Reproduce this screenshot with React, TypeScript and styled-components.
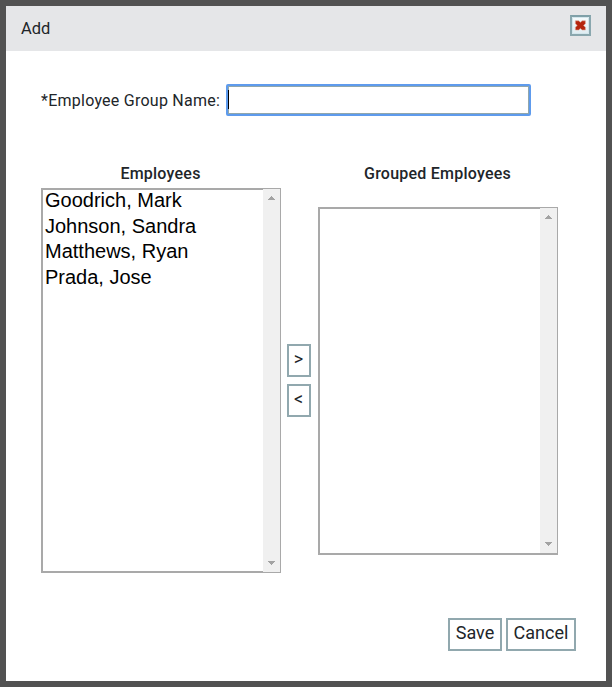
import React from 'react';
import styled, { createGlobalStyle } from 'styled-components';

const GlobalStyle = createGlobalStyle`
  * { box-sizing: border-box; }
  body { margin: 0; background: #525252; font-family: Roboto, sans-serif; color: #212529; }
`;

const Backdrop = styled.div`
  width: 612px;
  height: 687px;
  padding: 6px;
  background: #525252;
`;

const Dialog = styled.section`
  display: flex;
  flex-direction: column;
  height: 675px;
  background: #fff;
`;

const Header = styled.header`
  display: flex;
  justify-content: space-between;
  height: 45px;
  padding: 9px 15px 0;
  background: #e5e6e8;
`;

const Title = styled.h1`
  margin: 4px 0 0;
  font-size: 16.5px;
  line-height: 20px;
  font-weight: 400;
`;

const CloseButton = styled.button`
  display: flex;
  width: 21px;
  height: 21px;
  padding: 0;
  border: 2px solid #8aa7ae;
  border-top-color: #7fa0a8;
  background: linear-gradient(#f7fbfc, #dfecf1);
`;

const FieldRow = styled.label`
  display: flex;
  height: 32px;
  margin: 33px 0 0 35px;
`;

const FieldLabel = styled.span`
  width: 185px;
  font-size: 16px;
  letter-spacing: 0.25px;
  line-height: 33px;
  white-space: nowrap;
`;

const InputFrame = styled.span`
  width: 305px;
  height: 32px;
  padding: 4px 0 0;
  border: 2px solid #5e9bed;
  border-radius: 2px;
  box-shadow: inset 0 0 0 1px #91a6ab;
`;

const Caret = styled.span`
  display: block;
  width: 1px;
  height: 19px;
  background: #000;
`;

const Transfer = styled.div`
  display: flex;
  margin: 46px 0 0 35px;
`;

const Column = styled.div`
  width: 240px;
`;

const ColumnTitle = styled.h2<{ $gap: number }>`
  margin: 0 0 ${(p) => p.$gap}px;
  padding-right: 1px;
  font-size: 16px;
  letter-spacing: 0.23px;
  line-height: 24px;
  font-weight: 500;
  text-align: center;
`;

const ListBox = styled.div<{ $height: number; $bottom: number }>`
  display: flex;
  height: ${(p) => p.$height}px;
  border: 1px solid #a9a9a9;
  border-bottom-width: ${(p) => p.$bottom}px;
`;

const Options = styled.ul<{ $bottom: number }>`
  flex: 1;
  margin: 0;
  padding: 0 0 0 2px;
  border: solid #a9a9a9;
  border-width: 1px 0 ${(p) => p.$bottom}px 1px;
  list-style: none;
  font: 20px/25.67px "Liberation Sans", Arial, sans-serif;
  color: #000;
`;

const Option = styled.li`
  height: 25.67px;
  white-space: nowrap;

  &:first-child {
    margin-top: -2px;
  }
`;

const ScrollTrack = styled.div`
  display: flex;
  flex-direction: column;
  justify-content: space-between;
  align-items: center;
  width: 17px;
  padding: 7px 0;
  background: #f0f0f0;
`;

const Arrow = styled.svg`
  display: block;
  width: 7px;
  height: 4px;
  fill: #a3a3a3;
`;

const Moves = styled.div`
  display: flex;
  flex-direction: column;
  gap: 7px;
  width: 37px;
  padding: 182px 0 0 6px;
`;

const Button = styled.button<{ $width: number; $small?: boolean }>`
  width: ${(p) => p.$width}px;
  height: 33px;
  padding: 0 ${(p) => (p.$small ? 1 : 0)}px 3px 0;
  border: 2px solid #91a8ae;
  background: #fff;
  color: #212529;
  font: 18px/22px Roboto, sans-serif;
`;

const Footer = styled.footer`
  display: flex;
  justify-content: flex-end;
  gap: 4px;
  margin: 45px 30px 0 0;
`;

const employees = ['Goodrich, Mark', 'Johnson, Sandra', 'Matthews, Ryan', 'Prada, Jose'];

function EmployeeList({ items, height, edge }: { items: string[]; height: number; edge: number }) {
  return (
    <ListBox $height={height} $bottom={edge}>
      <Options $bottom={2 - edge}>
        {items.map((name) => (
          <Option key={name}>{name}</Option>
        ))}
      </Options>
      <ScrollTrack>
        <Arrow viewBox="0 0 7 4" shapeRendering="crispEdges">
          <path d="M3 0h1v1h1v1h1v1h1v1H0V3h1V2h1V1h1z" />
        </Arrow>
        <Arrow viewBox="0 0 7 4" shapeRendering="crispEdges">
          <path d="M0 0h7v1H6v1H5v1H4v1H3V3H2V2H1V1H0z" />
        </Arrow>
      </ScrollTrack>
    </ListBox>
  );
}

export default function App() {
  return (
    <>
      <GlobalStyle />
      <Backdrop>
        <Dialog>
          <Header>
            <Title>Add</Title>
            <CloseButton aria-label="Close">
              <svg width="17" height="17" viewBox="0 0 17 17">
                <path d="M.5 16.5V.5h16v16z" fill="none" stroke="#d3e6ec" />
                <path
                  d="M3.4 3.8h3.3l1.7 1.5 1.7-1.5h3.3v2.9l-1.8 1.7 1.8 1.8V13h-3.3l-1.7-1.5L6.7 13H3.4v-2.8l1.8-1.8-1.8-1.7z"
                  fill="#b5260e"
                  stroke="#dfa698"
                  strokeWidth=".6"
                />
              </svg>
            </CloseButton>
          </Header>
          <FieldRow>
            <FieldLabel>*Employee Group Name:</FieldLabel>
            <InputFrame>
              <Caret />
            </InputFrame>
          </FieldRow>
          <Transfer>
            <Column>
              <ColumnTitle $gap={2}>Employees</ColumnTitle>
              <EmployeeList items={employees} height={385} edge={1} />
            </Column>
            <Moves>
              <Button $width={24} $small>&gt;</Button>
              <Button $width={24} $small>&lt;</Button>
            </Moves>
            <Column>
              <ColumnTitle $gap={21}>Grouped Employees</ColumnTitle>
              <EmployeeList items={[]} height={348} edge={2} />
            </Column>
          </Transfer>
          <Footer>
            <Button $width={54}>Save</Button>
            <Button $width={70}>Cancel</Button>
          </Footer>
        </Dialog>
      </Backdrop>
    </>
  );
}
